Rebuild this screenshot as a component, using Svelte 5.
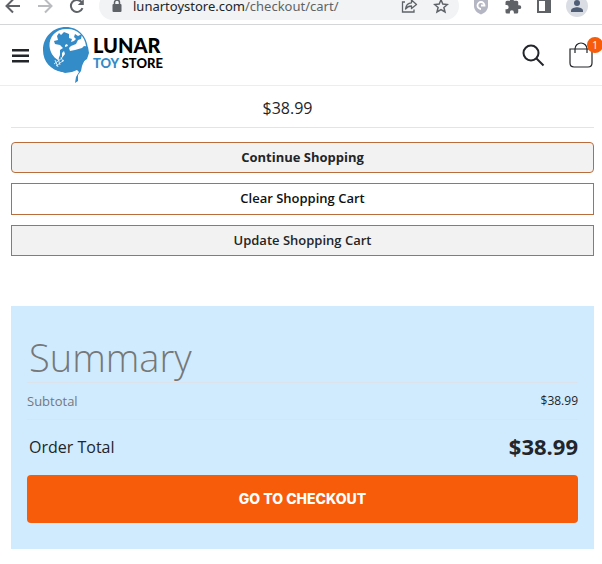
<script lang="ts">
	let cartCount = 1;
	let subtotal = 38.99;
	let loading = false;

	const host = 'lunartoystore.com';
	const path = '/checkout/cart/';

	function price(value: number) {
		return `$${value.toFixed(2)}`;
	}
</script>

<div class="browser">
	<div class="toolbar">
		<div class="nav">
			<button aria-label="Back">
				<svg width="16" height="16" viewBox="0 0 16 16" fill="none" stroke="#5f6368" stroke-width="2">
					<path d="M15 8H2M8 1.500L1.500 8L8 14.500" />
				</svg>
			</button>
			<button aria-label="Forward">
				<svg width="16" height="16" viewBox="0 0 16 16" fill="none" stroke="#b9bbbe" stroke-width="2">
					<path d="M1 8H14M8 1.500L14.500 8L8 14.500" />
				</svg>
			</button>
			<button aria-label="Reload" on:click={() => (loading = !loading)}>
				<svg width="16" height="16" viewBox="0 0 16 16" fill="none" stroke="#5f6368" stroke-width="2">
					<path d="M13.500 10.200A6 6 0 1 1 12.300 3.800L13.500 5" />
					<path d="M14.800 1V7H8.800Z" fill="#5f6368" stroke="none" />
				</svg>
			</button>
		</div>
		<div class="address">
			<svg width="10" height="14" viewBox="0 0 10 14">
				<path d="M2.500 6V3.500A2.500 2.500 0 0 1 7.500 3.500V6" fill="none" stroke="#5f6368" stroke-width="1.500" />
				<rect x="0.500" y="5" width="9" height="8" rx="1" fill="#5f6368" />
			</svg>
			<span class="url">{host}<span>{path}</span></span>
			<button aria-label="Share">
				<svg width="17" height="16" viewBox="0 0 17 16" fill="none" stroke="#5f6368" stroke-width="1.300">
					<path d="M4 4H1.500V14H13V11.500" />
					<path d="M4.500 11C5 7 7 5 10.500 4.800V2L15.500 6.500L10.500 10.500V8C8 8 6 9 4.500 11Z" stroke-linejoin="round" />
				</svg>
			</button>
			<button aria-label="Bookmark">
				<svg width="16" height="16" viewBox="0 0 16 16" fill="none" stroke="#5f6368" stroke-width="1.500">
					<path d="M8 1.800L9.800 6.100L14.400 6.500L10.900 9.500L12 14L8 11.600L4 14L5.100 9.500L1.600 6.500L6.200 6.100Z" />
				</svg>
			</button>
		</div>
		<div class="extensions">
			<button aria-label="Privacy shield">
				<svg width="16" height="18" viewBox="0 0 16 18">
					<path d="M8 0L15 2.500V9C15 13 12 16 8 17.500C4 16 1 13 1 9V2.500Z" fill="#b5b6c3" />
					<path d="M8 12A3.500 3.500 0 1 1 11.500 8.500H8" fill="none" stroke="#fff" stroke-width="1.800" />
				</svg>
			</button>
			<button aria-label="Extensions">
				<svg width="18" height="18" viewBox="0 0 24 24" fill="#5f6368">
					<path d="M20.500 11H19V7a2 2 0 0 0-2-2h-4V3.500a2.500 2.500 0 0 0-5 0V5H4a2 2 0 0 0-2 2v3.800h1.500a2.700 2.700 0 0 1 0 5.400H2V20a2 2 0 0 0 2 2h3.800v-1.500a2.700 2.700 0 0 1 5.400 0V22H17a2 2 0 0 0 2-2v-4h1.500a2.500 2.500 0 0 0 0-5Z" />
				</svg>
			</button>
			<button aria-label="Side panel">
				<svg width="14" height="14" viewBox="0 0 14 14">
					<rect x="1" y="1" width="12" height="12" fill="none" stroke="#5f6368" stroke-width="2" />
					<rect x="8" y="1" width="5" height="12" fill="#5f6368" />
				</svg>
			</button>
			<button aria-label="Profile">
				<svg width="22" height="22" viewBox="0 0 22 22">
					<circle cx="11" cy="11" r="11" fill="#dadde4" />
					<circle cx="11" cy="8" r="3" fill="#4f5d75" />
					<path d="M5 17V15.500C5 13 9 12.200 11 12.200S17 13 17 15.500V17Z" fill="#4f5d75" />
				</svg>
			</button>
		</div>
	</div>
</div>

<header>
	<button class="menu" aria-label="Menu">
		<svg width="17" height="15" viewBox="0 0 17 15" fill="#222529">
			<path d="M0 1h17v2.500H0zM0 6.500h17v2.500H0zM0 12h17v2.500H0z" />
		</svg>
	</button>
	<a class="logo" href="/" aria-label="Lunar Toy Store">
		<svg width="47" height="57" viewBox="3 3 47 57">
			<!-- moon -->
			<path
				fill="#338bc8"
				fill-rule="evenodd"
				d="M26 3C13 3 3 13 3 26C3 38 11 46 22 48L30 48C40 44 48 36 48 25C47 12 38 3 26 3ZM28 5C17 4 9 12 9.500 22C10 28 13 33 18 36L38 30L46 22C45 12 37 5 28 5Z"
			/>
			<!-- cow jumping over it -->
			<path
				fill="#338bc8"
				d="M19 9L21 11L24 8L29 10L29 14L32 15L31 18L34 17L36 15L34 13L35 10L38 12L42 10L41 15L38 16L36 20L31 22L29 24L30 27L35 26L42 24L44 22L48 23L49 29L47 35L44 37L42 42L41 47L38 51L38 57L35 59L36 53L39 48L37 46L32 48L25 49L17 46L13 40L18 36L20 31L20 26L23 24L20 21L15 20L14 17L18 16L17 12Z"
			/>
			<path fill="#fff" d="M25 21L27 20L28 22L25 23ZM22 29L24 27L25 30L22 34ZM47 37L45 43L42 46L43 41Z" />
			<path
				fill="none"
				stroke="#fff"
				stroke-width="0.800"
				d="M15 36L18 43M18 34L20 41M21 33L23 38M14 40L22 34M16 42L24 36"
			/>
		</svg>
		<span class="name">
			<span class="lunar">LUNAR</span>
			<span class="store"><span>TOY</span> STORE</span>
		</span>
	</a>
	<button class="search" aria-label="Search">
		<svg width="23" height="23" viewBox="0 0 23 23" fill="none" stroke="#222529" stroke-width="2">
			<circle cx="9" cy="9" r="7.500" />
			<path d="M14.500 14.500L21.500 21.500" />
		</svg>
	</button>
	<a class="cart" href="/checkout/cart" aria-label="Cart">
		<svg width="24" height="26" viewBox="0 0 24 26" fill="none" stroke="#222529" stroke-width="1.200">
			<path d="M1 7H23V21Q23 25 19 25H5Q1 25 1 21Z" />
			<path d="M6 11V7A6 6 0 0 1 18 7V11" />
		</svg>
		<span class="badge">{cartCount}</span>
	</a>
</header>

<main>
	<div class="itemTotal">{price(subtotal)}</div>

	<div class="actions">
		<button class="continue">Continue Shopping</button>
		<button class="clear">Clear Shopping Cart</button>
		<button class="update">Update Shopping Cart</button>
	</div>

	<section class="summary">
		<h1>Summary</h1>
		<table>
			<tbody>
				<tr class="subtotal">
					<th scope="row">Subtotal</th>
					<td>{price(subtotal)}</td>
				</tr>
				<tr class="total">
					<th scope="row">Order Total</th>
					<td>{price(subtotal)}</td>
				</tr>
			</tbody>
		</table>
		<button class="checkout">GO TO CHECKOUT</button>
	</section>
</main>

<style>
	:global(body) {
		background: #fff;
		color: #222529;
		font-family: 'Open Sans', sans-serif;
	}
	button {
		padding: 0;
		border: 0;
		background: none;
		color: inherit;
		font-family: inherit;
		cursor: pointer;
	}
	svg {
		display: block;
		flex-shrink: 0;
	}

	/* the bar is scrolled half out of view, so it hangs from its bottom edge */
	.browser {
		display: flex;
		align-items: flex-end;
		height: 20px;
		padding-bottom: 4px;
		border-bottom: 1px solid #d5d6d8;
		overflow: hidden;
	}
	.toolbar {
		display: flex;
		align-items: center;
		flex: 1;
		height: 28px;
	}
	.nav {
		display: flex;
		gap: 16px;
		padding: 0 14px 0 5px;
	}
	.address {
		display: flex;
		align-items: center;
		flex: 1;
		gap: 15px;
		height: 28px;
		padding: 0 10px 0 13px;
		border-radius: 14px;
		background: #f1f3f4;
	}
	.url {
		flex: 1;
		margin-left: -4px;
		font-family: 'Noto Sans', sans-serif;
		font-size: 13px;
		line-height: 20px;
	}
	.url > span {
		color: #5f6368;
	}
	.extensions {
		display: flex;
		align-items: center;
		gap: 15px;
		padding: 0 14px;
	}

	header {
		display: flex;
		align-items: center;
		height: 60px;
		padding: 0 9px 0 12px;
		border-bottom: 1px solid #ededed;
	}
	.logo {
		display: flex;
		align-items: center;
		gap: 3px;
		margin: 0 auto 0 14px;
		color: #000;
		text-decoration: none;
	}
	.name {
		display: flex;
		flex-direction: column;
		padding-bottom: 4px;
		font-family: Lato, sans-serif;
		font-weight: 900;
	}
	.lunar {
		font-size: 20px;
		line-height: 20px;
	}
	.store {
		font-size: 13px;
		line-height: 16px;
	}
	.store > span {
		color: #338bc8;
	}
	.cart {
		position: relative;
		margin-left: 24px;
	}
	.badge {
		position: absolute;
		top: -5px;
		right: -10px;
		width: 16px;
		border-radius: 50%;
		background: #f65c0a;
		color: #fff;
		font-size: 10px;
		line-height: 16px;
		text-align: center;
	}

	main {
		padding: 0 8px 0 11px;
	}
	.itemTotal {
		padding: 10px 30px 7px 0;
		border-bottom: 1px solid #e4e4e4;
		font-size: 16px;
		line-height: 24px;
		text-align: center;
	}
	.actions {
		display: flex;
		flex-direction: column;
		gap: 10px;
		padding: 14px 0 50px;
	}
	.actions > button {
		padding: 5px;
		border: 1px solid #b96d3c;
		background: #f2f2f2;
		font-size: 13px;
		font-weight: 600;
		line-height: 19px;
	}
	.actions > .continue {
		border-radius: 4px;
		font-weight: 700;
	}
	.actions > .clear {
		padding-bottom: 6px;
		background: #fff;
		color: #111;
	}

	.summary {
		padding: 26px 16px;
		background: #d0ebfe;
	}
	h1 {
		margin: 0;
		padding-left: 2px;
		color: #777;
		font-size: 38px;
		font-weight: 300;
		line-height: 50px;
	}
	table {
		width: 100%;
		border-collapse: collapse;
	}
	th,
	td {
		padding: 0;
		font-weight: 400;
		text-align: left;
	}
	td {
		text-align: right;
	}
	.subtotal {
		border-bottom: 1px solid #dbe4ec;
		border-top: 1px solid #dbe4ec;
		font-size: 13px;
		line-height: 36px;
	}
	.subtotal > th {
		color: #777;
	}
	.subtotal > td {
		font-size: 12px;
	}
	.total {
		line-height: 55px;
	}
	.total > th {
		padding-left: 2px;
		font-size: 16px;
		font-weight: 500;
	}
	.total > td {
		font-size: 22px;
		font-weight: 700;
		line-height: 52px;
		vertical-align: top;
	}
	.checkout {
		display: block;
		width: 100%;
		border-radius: 4px;
		background: #f65c0a;
		color: #fff;
		font-family: Inter, sans-serif;
		font-size: 14px;
		font-weight: 800;
		line-height: 48px;
	}
</style>
